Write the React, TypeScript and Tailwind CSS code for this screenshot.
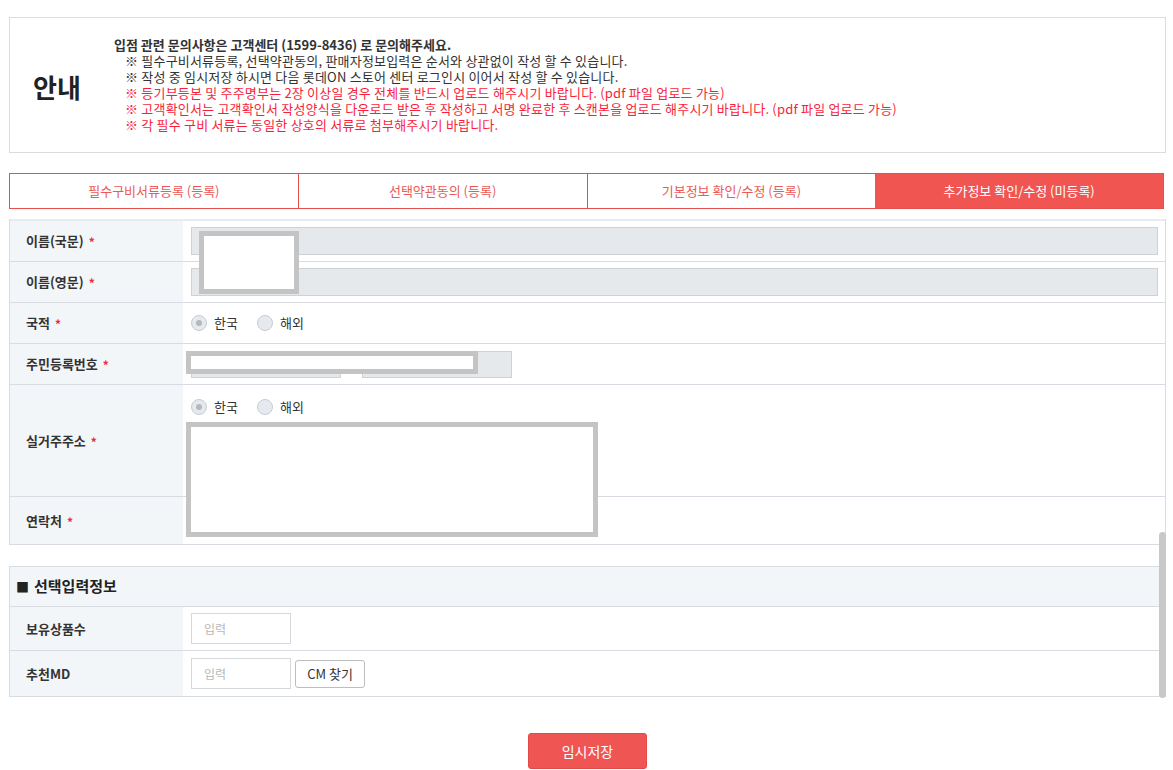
import React from "react";

const FONT = "font-['Noto_Sans_CJK_KR','Noto_Sans',sans-serif]";

function Req() {
  return <span className="ml-[5px] text-[12px] font-bold text-[#ee2a3a] relative top-[1px]">*</span>;
}

function Label({ text, req }: { text: string; req?: boolean }) {
  return (
    <div className="w-[173px] shrink-0 bg-[#f3f6f9] flex items-center pl-[16px] text-[13px] font-bold text-[#333]">
      <span>{text}</span>
      {req && <Req />}
    </div>
  );
}

function Radio({ checked, text }: { checked?: boolean; text: string }) {
  return (
    <div className="flex items-center">
      <span className="w-[16px] h-[16px] rounded-full border border-[#c6ccd3] bg-[#e6eaee] flex items-center justify-center">
        {checked && <span className="w-[6px] h-[6px] rounded-full bg-[#b4b9bf]" />}
      </span>
      <span className="ml-[7px] text-[13px] text-[#333]">{text}</span>
    </div>
  );
}

function Radios() {
  return (
    <div className="flex items-center gap-[19px]">
      <Radio checked text="한국" />
      <Radio text="해외" />
    </div>
  );
}

function Redact({ cls }: { cls: string }) {
  return <div className={"absolute border-[5px] border-[#c4c4c4] bg-white " + cls} />;
}

export default function App() {
  return (
    <div className={"w-[1173px] h-[770px] bg-white pl-[9px] pr-[7px] overflow-hidden " + FONT}>
      {/* Notice */}
      <div className="mt-[17px] h-[136px] border border-[#dcdcdc] flex items-center">
        <div className="w-[104px] shrink-0 pl-[23px] text-[26px] font-bold text-[#222] leading-none relative top-[2px]">안내</div>
        <div className="text-[13px] leading-[16px] text-[#333]">
          <div className="h-[16px] font-bold">입점 관련 문의사항은 고객센터 (1599-8436) 로 문의해주세요.</div>
          <div className="h-[16px] pl-[11px] tracking-[0.2px]">※ 필수구비서류등록, 선택약관동의, 판매자정보입력은 순서와 상관없이 작성 할 수 있습니다.</div>
          <div className="h-[16px] pl-[11px] tracking-[0.2px]">※ 작성 중 임시저장 하시면 다음 롯데ON 스토어 센터 로그인시 이어서 작성 할 수 있습니다.</div>
          <div className="h-[16px] pl-[11px] tracking-[0.2px] text-[#fa1e3c]">※ 등기부등본 및 주주명부는 2장 이상일 경우 전체를 반드시 업로드 해주시기 바랍니다. (pdf 파일 업로드 가능)</div>
          <div className="h-[16px] pl-[11px] tracking-[0.2px] text-[#fa1e3c]">※ 고객확인서는 고객확인서 작성양식을 다운로드 받은 후 작성하고 서명 완료한 후 스캔본을 업로드 해주시기 바랍니다. (pdf 파일 업로드 가능)</div>
          <div className="h-[16px] pl-[11px] tracking-[0.2px] text-[#fa1e3c]">※ 각 필수 구비 서류는 동일한 상호의 서류로 첨부해주시기 바랍니다.</div>
        </div>
      </div>

      {/* Tabs */}
      <div className="mt-[20px] mr-[2px] h-[36px] flex border border-[#e6504c] text-[13px]">
        <div className="flex-1 flex items-center justify-center text-[#ea5a56] border-r border-[#e6504c]">필수구비서류등록 (등록)</div>
        <div className="flex-1 flex items-center justify-center text-[#ea5a56] border-r border-[#e6504c]">선택약관동의 (등록)</div>
        <div className="flex-1 flex items-center justify-center text-[#ea5a56]">기본정보 확인/수정 (등록)</div>
        <div className="flex-1 flex items-center justify-center bg-[#f05552] text-white">추가정보 확인/수정 (미등록)</div>
      </div>

      {/* Scroll area */}
      <div className="relative mt-[10px] h-[480px] overflow-hidden">
        {/* Table 1 */}
        <div className="border-l border-r border-b border-[#d8dce2]">
          <div className="h-[2px] bg-[#e8ecf0]" />
          <div className="h-[41px] flex border-b border-[#d8dce2]">
            <Label text="이름(국문)" req />
            <div className="flex-1 flex items-center pl-[8px] pr-[7px]">
              <div className="w-full h-[28px] bg-[#e5e9ec] border border-[#cdd1d8]" />
            </div>
          </div>
          <div className="h-[41px] flex border-b border-[#d8dce2]">
            <Label text="이름(영문)" req />
            <div className="flex-1 flex items-center pl-[8px] pr-[7px]">
              <div className="w-full h-[28px] bg-[#e5e9ec] border border-[#cdd1d8]" />
            </div>
          </div>
          <div className="h-[41px] flex border-b border-[#d8dce2]">
            <Label text="국적" req />
            <div className="flex-1 flex items-center pl-[8px]">
              <Radios />
            </div>
          </div>
          <div className="h-[41px] flex border-b border-[#d8dce2]">
            <Label text="주민등록번호" req />
            <div className="flex-1 flex items-center pl-[8px]">
              <div className="w-[150px] h-[27px] bg-[#e5e9ec] border border-[#cdd1d8]" />
              <span className="w-[21px] text-center text-[12px] text-[#333]">-</span>
              <div className="w-[150px] h-[27px] bg-[#e5e9ec] border border-[#cdd1d8]" />
            </div>
          </div>
          <div className="h-[112px] flex border-b border-[#d8dce2]">
            <Label text="실거주주소" req />
            <div className="flex-1 flex flex-col pl-[8px] pt-[12px]">
              <Radios />
            </div>
          </div>
          <div className="h-[47px] flex">
            <Label text="연락처" req />
            <div className="flex-1" />
          </div>
        </div>

        {/* Table 2 */}
        <div className="mt-[21px] border border-[#d8dce2]">
          <div className="h-[40px] bg-[#f3f6f9] flex items-center pl-[6px] text-[15px] font-bold text-[#222] border-b border-[#d8dce2]">
            <span className="text-[13px] mr-[5px]">■</span>
            <span>선택입력정보</span>
          </div>
          <div className="h-[44px] flex border-b border-[#d8dce2]">
            <div className="w-[173px] shrink-0 bg-[#f3f6f9] flex items-center pl-[16px] text-[13px] font-bold text-[#333]">보유상품수</div>
            <div className="flex-1 flex items-center pl-[8px]">
              <div className="w-[100px] h-[31px] border border-[#d5d9de] bg-white flex items-center pl-[12px] text-[12px] text-[#b8b8b8]">입력</div>
            </div>
          </div>
          <div className="h-[45px] flex">
            <div className="w-[173px] shrink-0 bg-[#f3f6f9] flex items-center pl-[16px] text-[13px] font-bold text-[#333]">추천MD</div>
            <div className="flex-1 flex items-center pl-[8px]">
              <div className="w-[100px] h-[31px] border border-[#d5d9de] bg-white flex items-center pl-[12px] text-[12px] text-[#b8b8b8]">입력</div>
              <div className="ml-[4px] w-[70px] h-[28px] border border-[#bdbdbd] rounded-[3px] bg-white flex items-center justify-center text-[13px] text-[#333]">CM 찾기</div>
            </div>
          </div>
        </div>

        {/* Redaction boxes */}
        <Redact cls="left-[190px] top-[12px] w-[100px] h-[63px]" />
        <Redact cls="left-[177px] top-[132px] w-[292px] h-[23px]" />
        <Redact cls="left-[177px] top-[203px] w-[412px] h-[115px]" />

        {/* Scrollbar thumb */}
        <div className="absolute right-0 top-[313px] w-[7px] h-[166px] rounded-full bg-[#c8c8c8]" />
      </div>

      {/* Save */}
      <div className="mt-[34px] flex justify-center">
        <div className="w-[119px] h-[36px] rounded-[3px] bg-[#ef5552] border border-[#e04a47] flex items-center justify-center text-[14px] text-white">임시저장</div>
      </div>
    </div>
  );
}
